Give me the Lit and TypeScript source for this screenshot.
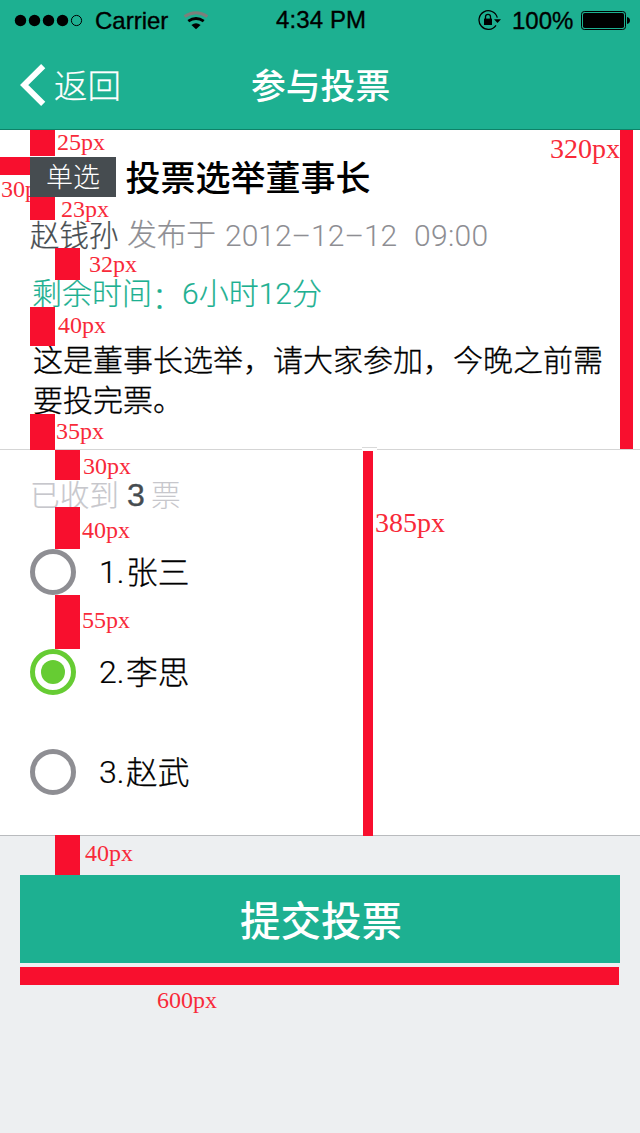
import { LitElement, html, svg, css } from "lit";
import { customElement, state } from "lit/decorators.js";

const BARS: [number, number, number, number][] = [
  [30, 130, 25, 26], [0, 157, 30, 18], [30, 197, 25, 23], [55, 248, 25, 32],
  [30, 307, 25, 39], [30, 414, 25, 36], [55, 450, 25, 30], [55, 507, 25, 42],
  [55, 595, 25, 54], [55, 835, 25, 40], [620, 130, 13, 319], [363, 451, 10, 385],
  [20, 967, 599, 18],
];

const LABELS: [number, number, string, number][] = [
  [57, 150, "25px", 24], [61, 217, "23px", 24], [89, 272, "32px", 24],
  [58, 333, "40px", 24], [56, 439, "35px", 24], [83, 474, "30px", 24],
  [82, 538, "40px", 24], [82, 628, "55px", 24], [85, 861, "40px", 24],
  [550, 158, "320px", 28], [375, 532, "385px", 28], [157, 1008, "600px", 24],
];

@customElement("measure-overlay")
export class MeasureOverlay extends LitElement {
  static styles = css`
    :host { display: block; pointer-events: none; }
    svg { display: block; }
    .bar { fill: #f80f2e; }
    .label { fill: #f82a39; font-family: "Liberation Serif", serif; }
  `;
  render() {
    return html`<svg width="640" height="1133" viewBox="0 0 640 1133">
      <defs><clipPath id="edge"><rect x="0" y="170" width="30" height="40"/></clipPath></defs>
      <rect x="362" y="447" width="15" height="4" fill="#fff"/>
      <rect x="362" y="447" width="15" height="1" fill="#d9d9d9"/>
      ${BARS.map(([x, y, w, h]) => svg`<rect class="bar" x=${x} y=${y} width=${w} height=${h}/>`)}
      ${LABELS.map(([x, y, t, s]) => svg`<text class="label" x=${x} y=${y} font-size=${s}>${t}</text>`)}
      <text class="label" x="1" y="197" font-size="24" clip-path="url(#edge)">30px</text>
    </svg>`;
  }
}

@customElement("app-root")
export class AppRoot extends LitElement {
  @state() private selected = 1;
  private options = [
    { n: "1.", name: "张三" },
    { n: "2.", name: "李思" },
    { n: "3.", name: "赵武" },
  ];

  static styles = css`
    :host {
      display: block; position: relative; width: 640px; height: 1133px; overflow: hidden;
      background: #edeff1; color: #000;
      font-family: "Noto Sans CJK SC", sans-serif; font-weight: 300; white-space: nowrap;
    }
    * { box-sizing: border-box; }
    .n { font-family: Roboto, sans-serif; font-weight: 300; }
    .remain .n { line-height: 0; }
    .colon { line-height: 0; vertical-align: -4px; }
    .head { height: 130px; background: #1db091; border-bottom: 1px solid #0e8268; }
    .status {
      height: 40px; display: grid; grid-template-columns: 276px 202px 1fr;
      font: 24px/41px "Liberation Sans", sans-serif; -webkit-text-stroke: 0.35px #000;
    }
    .status svg { display: block; -webkit-text-stroke: 0; }
    .left, .right { display: flex; }
    .carrier { width: 88px; }
    .clock { letter-spacing: 0.1px; line-height: 40px; }
    .percent { width: 68px; padding-left: 1px; }
    .nav { height: 89px; display: grid; grid-template-columns: 20px 34px 197px 1fr; line-height: 88px; }
    .back { font-size: 33.5px; color: #fff; -webkit-text-stroke: 0.25px #fff; }
    .title { font-size: 34.8px; color: #fff; font-weight: 500; line-height: 89px; }
    .info { height: 320px; background: #fff; border-bottom: 1px solid #d5d5d5; padding: 27px 0 0 30px; }
    .topic { display: flex; height: 40px; line-height: 40px; }
    .badge { width: 86px; background: #464c50; color: #fff; font-size: 27px; line-height: 38px; text-align: center; }
    .subject { margin-left: 9.5px; font-size: 35px; line-height: 37px; font-weight: 500; }
    .meta { height: 40px; margin-top: 17px; line-height: 38px; font-size: 30px; color: #8e8e93; display: flex; }
    .author { color: #464c50; width: 97px; font-size: 29.5px; -webkit-text-stroke: 0.25px #464c50; }
    .verb { width: 98px; -webkit-text-stroke: 0.2px #8e8e93; font-size: 29.7px; }
    .date { width: 189px; line-height: 43px; }
    .time { line-height: 43px; letter-spacing: 0.3px; }
    .remain { height: 40px; margin: 18px 0 0 2px; line-height: 38px; font-size: 30px; color: #1db091; -webkit-text-stroke: 0.2px #1db091; }
    .desc { width: 572px; margin: 26px 0 0 3px; font-size: 30px; line-height: 40px; white-space: normal; -webkit-text-stroke: 0.3px #000; }
    .vote { height: 386px; background: #fff; border-bottom: 1px solid #b9bbbe; padding: 25px 0 0 30px; }
    .count { height: 40px; line-height: 37px; font-size: 29.7px; color: #c7c7cc; display: flex; }
    .word { width: 97px; -webkit-text-stroke: 0.2px #c7c7cc; }
    .num { width: 24px; font: 32px/41px "Liberation Sans", sans-serif; color: #464c50; -webkit-text-stroke: 0.35px #464c50; }
    .options { display: grid; gap: 54px; margin-top: 34px; }
    .option { height: 46px; display: flex; font-size: 31.7px; line-height: 43px; -webkit-text-stroke: 0.3px #000; }
    .radio {
      width: 46px; height: 46px; border: 5px solid #8e8e93; border-radius: 50%;
      display: grid; place-items: center; margin-right: 23px;
    }
    .on { border-color: #66cc33; }
    .dot { width: 24px; height: 24px; border-radius: 50%; background: #66cc33; }
    .idx { width: 27px; font-size: 32px; line-height: 47px; -webkit-text-stroke: 0.2px #000; }
    .submit {
      margin: 39px 20px 0; height: 88px; background: #1db091; color: #fff; padding-left: 2px;
      font-size: 40.5px; font-weight: 500; line-height: 87px; text-align: center;
    }
    .overlay { position: absolute; inset: 0; }
  `;

  render() {
    return html`
      <header class="head">
        <div class="status">
          <div class="left">
            <svg width="95" height="40" viewBox="0 0 95 40">
              ${[20.5, 34.5, 48.5, 62.5].map((x) => svg`<circle cx=${x} cy="20.5" r="5.7"/>`)}
              <circle cx="76.5" cy="20.5" r="5.1" fill="none" stroke="#000" stroke-width="1"/>
            </svg>
            <span class="carrier">Carrier</span>
            <svg width="26" height="40" viewBox="183 0 26 40" fill="none">
              <path d="M184.6 16.6 Q196 8.8 207.4 16.6" stroke="#7d7f7b" stroke-width="3"/>
              <path d="M188.3 21.2 Q196 15.6 203.7 21.2" stroke="#000" stroke-width="2.9"/>
              <path d="M191.4 25 Q196 21.6 200.6 25 L196 29.2Z" fill="#000"/>
            </svg>
          </div>
          <span class="clock">4:34 PM</span>
          <div class="right">
            <svg width="33" height="40" viewBox="478 0 33 40" fill="none" stroke="#000">
              <path d="M497.3 17.6 A9.3 9.3 0 1 0 496 25.3" stroke-width="1.3"/>
              <path d="M494 19.3 H501 L497.5 23Z" fill="#000" stroke="none"/>
              <rect x="484" y="18.6" width="8" height="6.4" fill="#000" stroke="none"/>
              <path d="M485.5 19 V16.8 a2.5 2.5 0 0 1 5 0 V19" stroke-width="1.3"/>
            </svg>
            <span class="percent">100%</span>
            <svg width="54" height="40" viewBox="579 0 54 40">
              <rect x="581.5" y="11.5" width="44" height="18" rx="2.8" fill="none" stroke="#000"/>
              <rect x="583" y="13" width="41" height="15" rx="1.8"/>
              <path d="M627 17 q3 .6 3 3.5 t-3 3.5Z"/>
            </svg>
          </div>
        </div>
        <div class="nav">
          <span></span>
          <svg width="34" height="89" viewBox="20 40 34 89" fill="none">
            <path d="M43.2 66.2 L24.2 85 L43.2 103.8" stroke="#fff" stroke-width="5.9"/>
          </svg>
          <span class="back">返回</span>
          <span class="title">参与投票</span>
        </div>
      </header>

      <section class="info">
        <div class="topic"><span class="badge">单选</span><span class="subject">投票选举董事长</span></div>
        <div class="meta">
          <span class="author">赵钱孙</span><span class="verb">发布于</span>
          <span class="n date">2012–12–12</span><span class="n time">09:00</span>
        </div>
        <div class="remain">剩余时间<span class="colon">：</span><span class="n">6</span>小时<span class="n">12</span>分</div>
        <div class="desc">这是董事长选举，请大家参加，今晚之前需要投完票。</div>
      </section>

      <section class="vote">
        <div class="count"><span class="word">已收到</span><span class="num">3</span><span>票</span></div>
        <div class="options">
          ${this.options.map((o, i) => html`
            <div class="option" @click=${() => (this.selected = i)}>
              <span class="radio ${i === this.selected ? "on" : ""}">
                ${i === this.selected ? html`<span class="dot"></span>` : ""}
              </span>
              <span class="n idx">${o.n}</span><span>${o.name}</span>
            </div>`)}
        </div>
      </section>

      <div class="submit">提交投票</div>
      <measure-overlay class="overlay"></measure-overlay>
    `;
  }
}
